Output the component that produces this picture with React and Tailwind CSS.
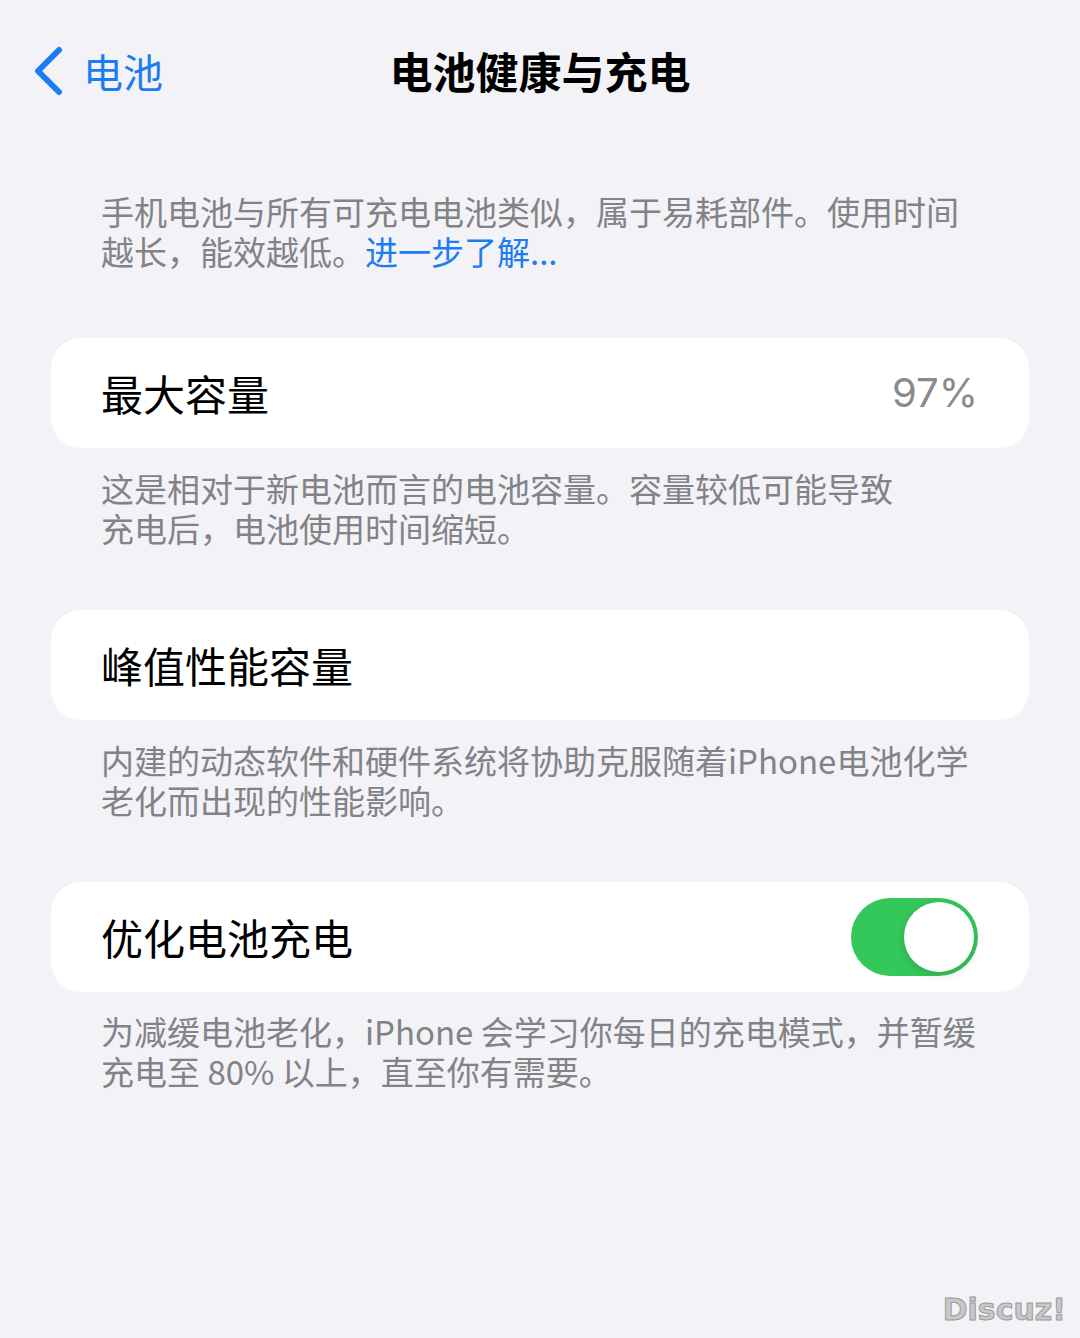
import { useState } from "react";

const cjk = "font-['Noto_Sans_CJK_SC','Noto_Sans',sans-serif]";

function Row({ children }) {
  return (
    <div className="mx-[51px] flex h-[110px] items-center justify-between rounded-[30px] bg-white pl-[50px] pr-[51px]">
      {children}
    </div>
  );
}

function Note({ children, className = "" }) {
  return (
    <p
      className={`mx-[101px] whitespace-nowrap text-[33px] leading-[40px] text-[#828287] ${className}`}
    >
      {children}
    </p>
  );
}

export default function App() {
  const [on, setOn] = useState(true);

  return (
    <div className={`relative min-h-[1338px] w-[1080px] bg-[#f2f2f7] ${cjk}`}>
      {/* nav */}
      <div className="relative flex h-[140px] items-center justify-center">
        <div className="absolute left-[32px] top-[46px] flex items-center gap-[17px] text-[#1c7cf4]">
          <svg width="34" height="50" viewBox="0 0 34 50" fill="none">
            <path
              d="M27 4 L6 25 L27 46"
              stroke="#1c7cf4"
              strokeWidth="6"
              strokeLinecap="round"
              strokeLinejoin="round"
            />
          </svg>
          <span className="text-[40px] leading-[48px]">电池</span>
        </div>
        <h1 className="text-[43px] font-bold leading-[50px] text-black">
          电池健康与充电
        </h1>
      </div>

      <Note className="mt-[51px]">
        手机电池与所有可充电电池类似，属于易耗部件。使用时间
        <br />
        越长，能效越低。<span className="text-[#1c7cf4]">进一步了解...</span>
      </Note>

      <div className="mt-[67px]">
        <Row>
          <span className="text-[42px] leading-[50px] text-black">最大容量</span>
          <span className="font-['Inter',sans-serif] text-[40px] text-[#8a8a8e]">
            97%
          </span>
        </Row>
      </div>

      <Note className="mt-[20px]">
        这是相对于新电池而言的电池容量。容量较低可能导致
        <br />
        充电后，电池使用时间缩短。
      </Note>

      <div className="mt-[62px]">
        <Row>
          <span className="text-[42px] leading-[50px] text-black">峰值性能容量</span>
        </Row>
      </div>

      <Note className="mt-[20px]">
        内建的动态软件和硬件系统将协助克服随着iPhone电池化学
        <br />
        老化而出现的性能影响。
      </Note>

      <div className="mt-[62px]">
        <Row>
          <span className="text-[42px] leading-[50px] text-black">优化电池充电</span>
          <button
            onClick={() => setOn(!on)}
            className={`flex h-[78px] w-[127px] items-center rounded-full p-[4px] ${
              on ? "justify-end bg-[#34c759]" : "justify-start bg-[#e9e9ea]"
            }`}
          >
            <span className="h-[70px] w-[70px] rounded-full bg-white shadow-[0_3px_8px_rgba(0,0,0,0.15)]" />
          </button>
        </Row>
      </div>

      <Note className="mt-[19px]">
        为减缓电池老化，iPhone 会学习你每日的充电模式，并暂缓
        <br />
        充电至 80% 以上，直至你有需要。
      </Note>

      <div className="absolute bottom-[6px] right-[14px] font-['DejaVu_Sans',sans-serif] text-[30px] font-bold text-[#c8c8c8] [-webkit-text-stroke:1px_#9a9a9a]">
        Discuz!
      </div>
    </div>
  );
}
